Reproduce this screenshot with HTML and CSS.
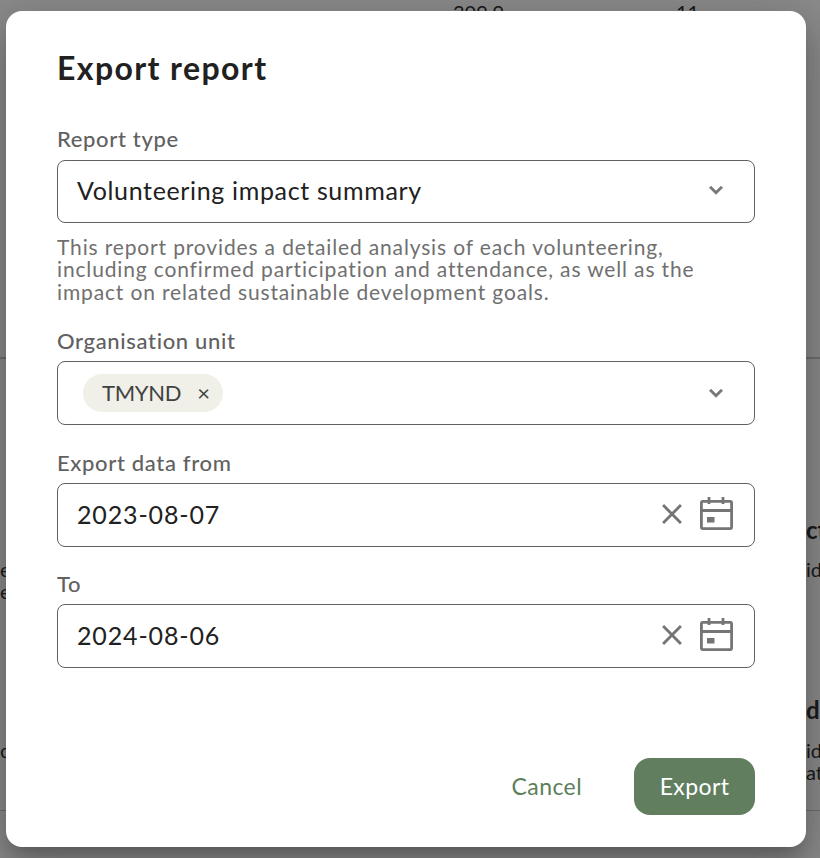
FILE: index.html
```html
<!DOCTYPE html>
<html lang="en">
<head>
<meta charset="utf-8">
<title>Export report</title>
<link rel="stylesheet" href="styles.css">
</head>
<body>
<div class="page">
  <div class="top-row"><span class="num-a">309.9</span><span class="num-b">11</span></div>
  <div class="bg-rule rule-one"></div>
  <div class="bg-row row-a"><span class="bg-left"></span><span class="bg-right bg-title">ct</span></div>
  <div class="bg-row row-b"><span class="bg-left">er</span><span class="bg-right">id</span></div>
  <div class="bg-row row-c"><span class="bg-left">e</span><span class="bg-right"></span></div>
  <div class="bg-row row-d"><span class="bg-left"></span><span class="bg-right bg-title">d</span></div>
  <div class="bg-row row-e"><span class="bg-left">o</span><span class="bg-right">id</span></div>
  <div class="bg-row row-f"><span class="bg-left"></span><span class="bg-right">at</span></div>
  <div class="bg-rule rule-two"></div>
</div>
<div class="overlay"></div>
<main class="dialog">
  <h1 class="title">Export report</h1>
  <div class="field field-type">
    <label class="label">Report type</label>
    <div class="control control-select">
      <span class="value">Volunteering impact summary</span>
      <svg class="chevron" viewBox="0 0 24 24"><path d="M16.59 8.59 12 13.17 7.41 8.59 6 10l6 6 6-6z"/></svg>
    </div>
    <p class="help">This report provides a detailed analysis of each volunteering, including confirmed participation and attendance, as well as the impact on related sustainable development goals.</p>
  </div>
  <div class="field field-unit">
    <label class="label">Organisation unit</label>
    <div class="control control-tags">
      <span class="chip"><span class="chip-text">TMYND</span><span class="chip-x">×</span></span>
      <svg class="chevron" viewBox="0 0 24 24"><path d="M16.59 8.59 12 13.17 7.41 8.59 6 10l6 6 6-6z"/></svg>
    </div>
  </div>
  <div class="field field-from">
    <label class="label">Export data from</label>
    <div class="control control-date">
      <span class="value">2023-08-07</span>
      <svg class="clear" viewBox="0 0 24 24"><path d="M19 6.41 17.59 5 12 10.59 6.41 5 5 6.41 10.59 12 5 17.59 6.41 19 12 13.41 17.59 19 19 17.59 13.41 12z"/></svg>
      <svg class="calendar" viewBox="0 0 33 33"><rect class="cal-line" x="1.4" y="4.4" width="30.2" height="27.2" rx="1.5"/><path class="cal-line" d="M1.4 13.5h30.2M9 0v7M23 0v7"/><rect class="cal-fill" x="7" y="20" width="7.5" height="5.5"/></svg>
    </div>
  </div>
  <div class="field field-to">
    <label class="label">To</label>
    <div class="control control-date">
      <span class="value">2024-08-06</span>
      <svg class="clear" viewBox="0 0 24 24"><path d="M19 6.41 17.59 5 12 10.59 6.41 5 5 6.41 10.59 12 5 17.59 6.41 19 12 13.41 17.59 19 19 17.59 13.41 12z"/></svg>
      <svg class="calendar" viewBox="0 0 33 33"><rect class="cal-line" x="1.4" y="4.4" width="30.2" height="27.2" rx="1.5"/><path class="cal-line" d="M1.4 13.5h30.2M9 0v7M23 0v7"/><rect class="cal-fill" x="7" y="20" width="7.5" height="5.5"/></svg>
    </div>
  </div>
  <div class="actions">
    <button class="btn btn-text">Cancel</button>
    <button class="btn btn-primary">Export</button>
  </div>
</main>
</body>
</html>
```
FILE: styles.css
```css
* { box-sizing: border-box; }
html, body { margin: 0; height: 100%; overflow: hidden; background: #fff; }
body { font-family: "Lato", "Noto Sans", sans-serif; color: #212121; }

.page { height: 858px; width: 820px; overflow: hidden; font-size: 20px; color: #333; }
.top-row { display: flex; height: 11px; overflow: hidden; padding-left: 453px; line-height: 24px; }
.num-a { width: 223px; }
.bg-rule { height: 2px; background: #ccc; }
.rule-one { margin-top: 346px; }
.rule-two { margin-top: 26px; height: 1px; }
.bg-row { display: flex; justify-content: space-between; line-height: 24px; height: 24px; }
.bg-left { width: 6px; overflow: hidden; white-space: nowrap; }
.bg-right { width: 14px; overflow: hidden; white-space: nowrap; }
.bg-title { font-size: 24px; font-weight: 700; }
.row-a { margin-top: 159px; }
.row-b { margin-top: 15px; }
.row-c { margin-top: -2px; }
.row-d { margin-top: 95px; }
.row-e { margin-top: 16px; }
.row-f { margin-top: -2px; }

.overlay { position: absolute; inset: 0; background: rgba(0, 0, 0, 0.46); }

.dialog {
  position: absolute; left: 6px; top: 11px; width: 800px; height: 836px;
  background: #fff; border-radius: 16px; padding: 0 51px;
  box-shadow: 0 11px 15px -7px rgba(0,0,0,.2), 0 24px 38px 3px rgba(0,0,0,.14), 0 9px 46px 8px rgba(0,0,0,.12);
  display: flex; flex-direction: column;
}
.title { margin: 36px 0 0; font-size: 32px; line-height: 42px; font-weight: 700; color: #212121; letter-spacing: 1.4px; }
.field { display: flex; flex-direction: column; }
.field-type { margin-top: 36px; }
.field-unit { margin-top: 24px; }
.field-from { margin-top: 24px; }
.field-to { margin-top: 22px; }
.label { font-size: 22px; line-height: 28px; font-weight: 500; color: #616161; padding-bottom: 7px; letter-spacing: 0.65px; }
.field-unit .label, .field-from .label { padding-bottom: 6px; }
.field-to .label { padding-top: 1px; padding-bottom: 6px; }
.control {
  display: flex; align-items: center; height: 64px; border: 1px solid #616161; border-radius: 8px;
  padding: 0 10px 3px 19px; background: #fff;
}
.control-select { height: 63px; }
.value { font-size: 25px; color: #212121; flex: 1; letter-spacing: 0.65px; }
.control-date .value { letter-spacing: 0.85px; }
.chevron { width: 26px; height: 26px; fill: #757575; stroke: #757575; stroke-width: .8px; margin-right: 15px; }
.control-tags { justify-content: space-between; padding-left: 25px; padding-bottom: 0; }
.chip { display: flex; align-items: center; height: 38px; padding: 0 13px 2px 19px; border-radius: 19px; background: #f0f0e8; color: #424242; }
.chip-text { font-size: 22px; letter-spacing: -0.3px; }
.chip-x { font-size: 22px; margin-left: 16px; }
.clear { width: 34px; height: 34px; fill: #757575; margin-right: 11px; }
.calendar { width: 33px; height: 33px; margin-right: 11px; }
.cal-line { fill: none; stroke: #757575; stroke-width: 2.8; }
.cal-fill { fill: #757575; }
.help { margin: 13px 0 0; max-width: 680px; font-size: 21px; line-height: 22.4px; color: #707070; letter-spacing: 0.85px; }
.actions { margin-top: auto; margin-bottom: 32px; display: flex; justify-content: flex-end; align-items: center; gap: 26px; }
.btn { font-family: inherit; font-size: 23px; border: 0; border-radius: 16px; height: 57px; padding: 0 26px 2px; background: none; cursor: pointer; letter-spacing: 0.4px; }
.btn-text { color: #5c7f5a; }
.btn-primary { background: #617e5f; color: #fff; width: 121px; padding: 0 0 2px; }
```
